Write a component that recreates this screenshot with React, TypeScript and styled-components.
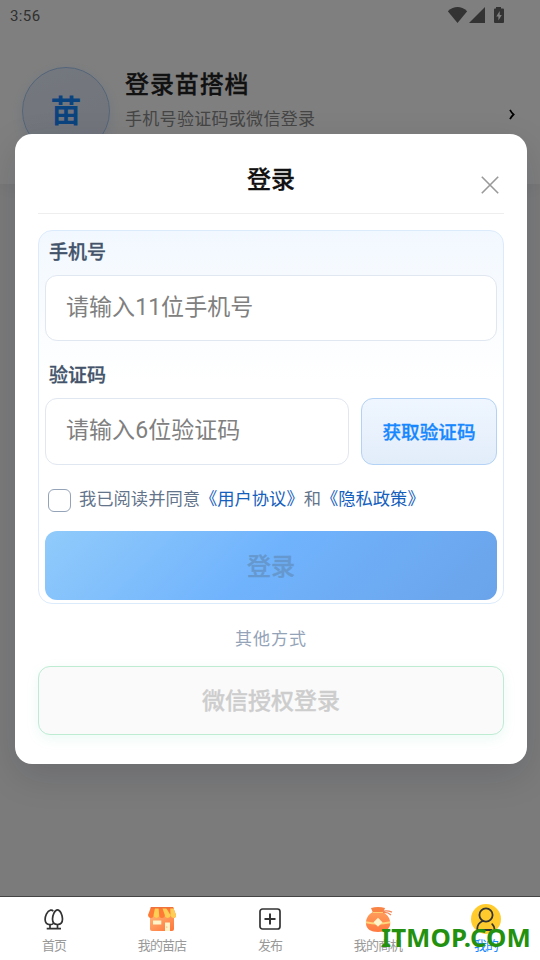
import React from 'react';
import styled, { createGlobalStyle, css } from 'styled-components';

const sans = `Roboto, "Noto Sans CJK SC", sans-serif`;

const strong = css`
  font-weight: 500;
  -webkit-text-stroke: 0.3px currentColor;
`;

const GlobalStyle = createGlobalStyle`
  * { box-sizing: border-box; }
  body { margin: 0; background: #f8f8f8; font-family: ${sans}; }
  button, input { font-family: inherit; margin: 0; }
`;

const Screen = styled.div`
  position: relative;
  width: 540px;
  height: 960px;
  overflow: hidden;
  display: flex;
  flex-direction: column;
  background: #f7f7f7;
`;

const Hero = styled.header`
  height: 184px;
  background: #fff;
  box-shadow: 0 4px 18px rgba(15, 23, 42, 0.06);
`;

const StatusBar = styled.div`
  display: flex;
  align-items: center;
  justify-content: space-between;
  height: 32px;
  padding: 0 35px 0 10px;
  font-size: 15px;
  letter-spacing: 0.4px;
  color: #626262;
`;

const StatusIcons = styled.svg`
  width: 58px;
  height: 18px;
  margin-top: -3px;
`;

const Profile = styled.div`
  display: flex;
  align-items: flex-start;
  padding: 35px 22px 0;
`;

const Avatar = styled.div`
  display: flex;
  align-items: center;
  justify-content: center;
  width: 88px;
  height: 88px;
  padding-top: 2px;
  border: 1px solid #a6c9f4;
  border-radius: 50%;
  background: linear-gradient(160deg, #e8f1fd, #e3e9f6);
  box-shadow: 0 4px 14px rgba(24, 100, 200, 0.12);
  color: #1687ff;
  font-size: 31px;
  font-weight: 700;
  line-height: 84px;
`;

const ProfileText = styled.div`
  flex: 1;
  margin-left: 15px;
`;

const ProfileName = styled.div`
  ${strong}
  margin-top: 1px;
  font-size: 24px;
  line-height: 34px;
  letter-spacing: 0.9px;
  color: #222;
`;

const ProfileHint = styled.div`
  font-size: 17px;
  line-height: 24px;
  margin-top: 5px;
  letter-spacing: 0.3px;
  color: #8b8b8b;
`;

const Chevron = styled.svg`
  width: 6px;
  height: 11px;
  margin: 42px 3px 0 0;
`;

const TabBar = styled.nav`
  display: grid;
  grid-template-columns: repeat(5, 1fr);
  height: 64px;
  margin-top: auto;
  border-top: 1px solid #444;
  background: #fff;
`;

const Tab = styled.div<{ $active?: boolean }>`
  display: flex;
  flex-direction: column;
  align-items: center;
  padding-top: 6px;
  font-size: 13px;
  line-height: 21px;
  letter-spacing: -0.9px;
  color: ${(p) => (p.$active ? '#1687ff' : '#999')};

  svg { width: 32px; height: 32px; flex: none; }
`;

const Backdrop = styled.div`
  position: absolute;
  inset: 0 0 64px;
  padding: 134px 13px 0 15px;
  background: rgba(0, 0, 0, 0.5);
`;

const Dialog = styled.section`
  height: 630px;
  padding: 0 23px;
  border-radius: 17px;
  background: #fff;
  box-shadow: 0 12px 36px rgba(15, 23, 42, 0.14);
`;

const DialogHead = styled.div`
  display: grid;
  grid-template-columns: 40px 1fr 40px;
  height: 80px;
  border-bottom: 1px solid #eee;
`;

const DialogTitle = styled.h1`
  ${strong}
  grid-column: 2;
  margin: 28px 0 0;
  text-align: center;
  font-size: 24px;
  line-height: 36px;
  color: #111;
`;

const CloseIcon = styled.svg`
  width: 18px;
  height: 18px;
  margin: 42px 0 0 17px;
`;

const Form = styled.div`
  height: 374px;
  margin-top: 16px;
  padding: 0 6px;
  border: 1px solid #dcebfc;
  border-radius: 14px;
  background: linear-gradient(180deg, #f2f8ff 0, #fff 150px);
`;

const Label = styled.div<{ $second?: boolean }>`
  ${strong}
  height: 44px;
  padding: 8px 4px 0;
  font-size: 19px;
  line-height: 28px;
  color: #43536a;
  ${(p) => p.$second && css`
    height: 57px;
    padding-top: 21px;
  `}
`;

const Field = styled.input`
  display: block;
  flex: 1;
  min-width: 0;
  width: 100%;
  height: 66px;
  padding: 0 20px 2px;
  border: 1px solid #e0e7f0;
  border-radius: 12px;
  outline: 0;
  background: #fff;
  font-size: 23px;
  letter-spacing: 0.05px;
  color: #333;

  &::placeholder { color: #808080; opacity: 1; }
`;

const CodeRow = styled.div`
  display: flex;
  gap: 12px;
  height: 67px;

  ${Field} { height: 67px; }
`;

const CodeButton = styled.button`
  ${strong}
  flex: none;
  width: 136px;
  padding: 0 0 3px;
  border: 1px solid #b3d2f5;
  border-radius: 12px;
  background: linear-gradient(180deg, #eff6ff, #e2edfa);
  color: #1687ff;
  font-size: 18.6px;
`;

const Agreement = styled.div`
  display: flex;
  align-items: center;
  height: 66px;
  padding: 2px 3px 0;
  font-size: 17.3px;
  line-height: 26px;
  white-space: nowrap;
  color: #64748b;
`;

const Checkbox = styled.span`
  width: 23px;
  height: 23px;
  margin: 3px 8px 0 0;
  border: 1px solid #94a3b8;
  border-radius: 6px;
  background: #fff;
`;

const AgreementText = styled.span`
  margin-top: -1px;
`;

const PolicyLink = styled.span`
  color: #1560bd;
`;

const LoginButton = styled.button`
  ${strong}
  display: block;
  width: 100%;
  height: 69px;
  padding: 0 0 3px;
  border: 0;
  border-radius: 12px;
  background: linear-gradient(135deg, #91cbfb 0%, #70b3fd 48%, #6aa3e9 100%);
  color: #6598ce;
  font-size: 24px;
`;

const OtherWays = styled.div`
  padding: 22px 0 13px;
  text-align: center;
  font-size: 17px;
  line-height: 27px;
  letter-spacing: 1px;
  color: #94a3b8;
`;

const WechatButton = styled.button`
  ${strong}
  display: block;
  width: 100%;
  height: 69px;
  padding: 0 0 3px;
  border: 1px solid #bdecd3;
  border-radius: 12px;
  background: #fafafa;
  box-shadow: 0 4px 14px rgba(16, 185, 129, 0.08);
  color: #cdcdcd;
  font-size: 23px;
`;

const Watermark = styled.div`
  position: absolute;
  left: 381px;
  top: 920px;
  font-family: "Noto Sans", sans-serif;
  font-size: 25.8px;
  line-height: 34px;
  font-weight: 700;
  letter-spacing: 0.1px;
  color: #23910f;
  white-space: nowrap;
`;

const HomeIcon = () => (
  <svg viewBox="0 0 32 32" fill="none" stroke="#333" strokeWidth="1.7">
    <path d="M15.2 8.2C14.6 7.4 13.6 7 12.6 7.2C8.9 8 6.9 13.6 7.1 16.8C7.3 19.9 9.2 21.7 11.9 21.7C13.5 21.7 14.9 21.1 15.7 20.2" />
    <path d="M19.5 6.8C16.6 6.8 14.5 12.5 14.5 16C14.5 19.5 16.7 21.5 19.5 21.5S24.5 19.5 24.5 16C24.5 12.5 22.4 6.8 19.5 6.8Z" />
    <path d="M12 21.5V25.5M19.5 21.3V25.5M8.7 25.7H23" />
  </svg>
);

const ShopIcon = () => (
  <svg viewBox="0 0 32 32">
    <defs>
      <linearGradient id="shopWall" x2="1" y2="1">
        <stop stopColor="#ffb478" />
        <stop offset="1" stopColor="#ff7438" />
      </linearGradient>
    </defs>
    <path d="M4 12H28V26Q28 28 26 28H6Q4 28 4 26Z" fill="url(#shopWall)" />
    <path d="M5 4H27L30 12Q30 15 27.5 15T24.5 12Q24.5 15 21.6 15T18.8 12Q18.8 15 16 15T13.2 12Q13.2 15 10.4 15T7.6 12Q7.6 15 5 15T2 12Z" fill="#ff7a35" />
    <path d="M9.2 4H12.5L13.2 12Q13.2 15 10.4 15T7.6 12ZM16 4H19.5L24.5 12Q24.5 15 21.6 15T18.8 12ZM24.2 4H27L30 12Q30 15 27.5 15T24.5 12Z" fill="#ffce54" />
    <path d="M5 4H27L27.7 5.5H4.3Z" fill="#ef713b" />
    <path d="M7 17.5H15.3V21.5H7ZM19 19.5H24V28H19Z" fill="#fff4c9" />
    <circle cx="20.8" cy="24" r=".6" fill="#ff8c48" />
  </svg>
);

const PublishIcon = () => (
  <svg viewBox="0 0 32 32" fill="none" stroke="#333" strokeWidth="1.7">
    <rect x="6" y="6" width="20" height="20" rx="2.5" />
    <path d="M16 10.5V21.5M10.5 16H21.5" strokeWidth="2" />
  </svg>
);

const PurseIcon = () => (
  <svg viewBox="0 0 32 32">
    <defs>
      <linearGradient id="purse" x2="0" y2="1">
        <stop stopColor="#ff9d5c" />
        <stop offset="1" stopColor="#ff7940" />
      </linearGradient>
    </defs>
    <path d="M11 9C5 12 3.8 17 4 21C4.3 26 9 29 16 29S28 26 28.2 21C28.5 16 26 12 21 9Z" fill="url(#purse)" />
    <path d="M9 5Q16 3 23 5L21 10H11Z" fill="#f88345" />
    <path d="M20 8.5Q25 7 30 9.2M21 9.5Q26 9 29 12" fill="none" stroke="#f58655" strokeWidth="1.3" />
    <path d="M3.9 18.3Q16 21 28.2 18.3V20.3Q16 23 3.9 20.3Z" fill="#ffd67c" />
    <path d="M16 14.8L20.5 19.3L16 23.8L11.5 19.3Z" fill="#fff4cb" />
    <path d="M11 9.5H21" stroke="#ffd071" />
  </svg>
);

const MineIcon = () => (
  <svg viewBox="0 0 32 32">
    <circle cx="16" cy="16" r="15" fill="#ffcb2d" />
    <g fill="none" stroke="#333" strokeWidth="1.8" strokeLinecap="round">
      <circle cx="16" cy="12" r="6.6" />
      <path d="M12.7 18C9.2 19.5 7.3 22.5 7.2 26Q7.2 27 8.5 27H21.5M22.2 21.2Q24.4 23.5 24.5 26" />
    </g>
  </svg>
);

const tabs = [
  { label: '首页', Icon: HomeIcon },
  { label: '我的苗店', Icon: ShopIcon },
  { label: '发布', Icon: PublishIcon },
  { label: '我的商机', Icon: PurseIcon },
  { label: '我的', Icon: MineIcon, active: true },
];

export default function App() {
  return (
    <Screen>
      <GlobalStyle />
      <Hero>
        <StatusBar>
          <span>3:56</span>
          <StatusIcons viewBox="0 0 58 18" fill="#666">
            <path d="M.8 5.2Q10.5-3 20.2 5.2L10.5 17Z" />
            <path d="M38 1V17H22Z" />
            <path fillRule="evenodd" d="M49 1H54V2.5H56Q57 2.5 57 3.5V16Q57 17 56 17H48Q47 17 47 16V3.5Q47 2.5 48 2.5H49ZM52.7 5L49.3 10.4H51.4V14.5L54.8 9H52.7Z" />
          </StatusIcons>
        </StatusBar>
        <Profile>
          <Avatar>苗</Avatar>
          <ProfileText>
            <ProfileName>登录苗搭档</ProfileName>
            <ProfileHint>手机号验证码或微信登录</ProfileHint>
          </ProfileText>
          <Chevron viewBox="0 0 6 11">
            <path d="M1 .8Q2.6 3.8 4.6 5.5Q2.6 7.2 1 10.2" fill="none" stroke="#000" strokeWidth="1.7" />
          </Chevron>
        </Profile>
      </Hero>

      <TabBar>
        {tabs.map(({ label, Icon, active }) => (
          <Tab key={label} $active={active}>
            <Icon />
            <span>{label}</span>
          </Tab>
        ))}
      </TabBar>

      <Backdrop>
        <Dialog>
          <DialogHead>
            <DialogTitle>登录</DialogTitle>
            <CloseIcon viewBox="0 0 18 18">
              <path d="M.8.8L17.2 17.2M17.2.8L.8 17.2" stroke="#999" strokeWidth="1.6" />
            </CloseIcon>
          </DialogHead>
          <Form>
            <Label>手机号</Label>
            <Field placeholder="请输入11位手机号" />
            <Label $second>验证码</Label>
            <CodeRow>
              <Field placeholder="请输入6位验证码" />
              <CodeButton>获取验证码</CodeButton>
            </CodeRow>
            <Agreement>
              <Checkbox />
              <AgreementText>
                我已阅读并同意<PolicyLink>《用户协议》</PolicyLink>和<PolicyLink>《隐私政策》</PolicyLink>
              </AgreementText>
            </Agreement>
            <LoginButton>登录</LoginButton>
          </Form>
          <OtherWays>其他方式</OtherWays>
          <WechatButton>微信授权登录</WechatButton>
        </Dialog>
      </Backdrop>
      <Watermark>ITMOP.COM</Watermark>
    </Screen>
  );
}
